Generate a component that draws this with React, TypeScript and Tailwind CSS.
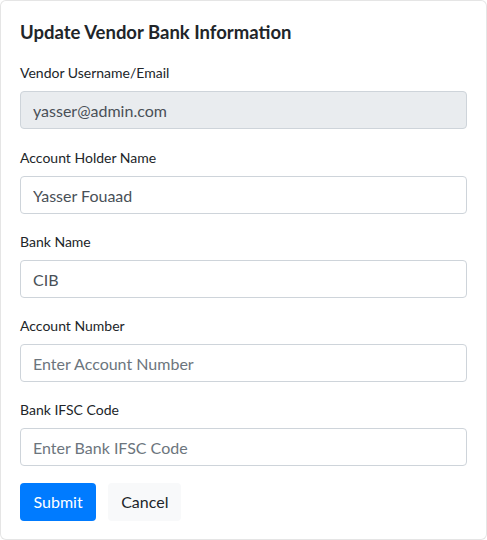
import React from "react";

const font = { fontFamily: 'Lato, "Noto Sans", Arial, sans-serif' };

function Field({ label, value, placeholder, disabled, first }: { label: string; value?: string; placeholder?: string; disabled?: boolean; first?: boolean }) {
  return (
    <div className={first ? "mb-[18px]" : "mb-[17px]"}>
      <label className="block text-[14px] leading-[21px] text-[#212529] mb-2">{label}</label>
      <input
        readOnly
        disabled={disabled}
        defaultValue={value}
        placeholder={placeholder}
        className={`block w-full h-[38px] px-3 text-[16px] rounded-[4px] border border-[#ced4da] text-[#495057] placeholder:text-[#6c757d] outline-none ${disabled ? "bg-[#e9ecef]" : "bg-white"}`}
        style={font}
      />
    </div>
  );
}

export default function App() {
  return (
    <div className="w-[487px] h-[540px] bg-white rounded-[6px] border border-black/10 px-[19px] pt-[16px]" style={font}>
      <h5 className="text-[18.5px] leading-[30px] font-bold text-[#212529] mb-[15px]">Update Vendor Bank Information</h5>
      <Field label="Vendor Username/Email" value="yasser@admin.com" disabled first />
      <Field label="Account Holder Name" value="Yasser Fouaad" />
      <Field label="Bank Name" value="CIB" />
      <Field label="Account Number" placeholder="Enter Account Number" />
      <Field label="Bank IFSC Code" placeholder="Enter Bank IFSC Code" />
      <div className="flex gap-3">
        <button className="h-[38px] px-[13.5px] rounded-[4px] bg-[#007bff] text-white text-[16px]" style={font}>Submit</button>
        <button className="h-[38px] px-[13px] rounded-[4px] bg-[#f8f9fa] text-[#212529] text-[16px]" style={font}>Cancel</button>
      </div>
    </div>
  );
}
